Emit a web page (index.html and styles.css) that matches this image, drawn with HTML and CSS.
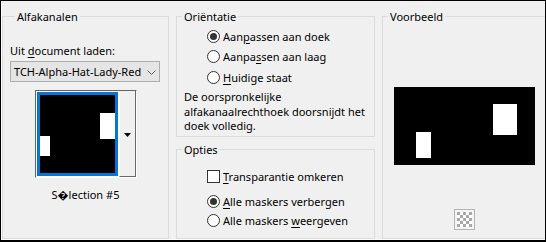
FILE: index.html
```html
<!DOCTYPE html>
<html lang="nl">
<head>
<meta charset="utf-8">
<title>Alfakanalen</title>
<link rel="stylesheet" href="styles.css">
</head>
<body>
<div class="dialog">
  <fieldset class="group g-alpha">
    <legend>Alfakanalen</legend>
    <div class="field-label">Uit <u>d</u>ocument laden:</div>
    <div class="select">
      <span class="select-text">TCH-Alpha-Hat-Lady-Red</span>
      <svg class="chev" width="9" height="5" viewBox="0 0 9 5"><polyline points="0.5,0.5 4.5,4.5 8.5,0.5" fill="none" stroke="#606060" stroke-width="1"/></svg>
    </div>
    <div class="thumb-frame">
      <div class="thumb">
        <svg class="thumb-img" width="75" height="78" viewBox="0 0 75 78"><rect width="75" height="78" fill="#000"/><rect x="60" y="18" width="15" height="26" fill="#fff"/><rect x="0" y="41" width="10" height="20" fill="#fff"/></svg>
      </div>
      <div class="thumb-btn">
        <svg width="7" height="4" viewBox="0 0 7 4"><polygon points="0,0 7,0 3.5,4" fill="#000"/></svg>
      </div>
    </div>
    <div class="caption">S&#xFFFD;lection #5</div>
  </fieldset>

  <div class="middle">
    <fieldset class="group g-orient">
      <legend>Oriëntatie</legend>
      <div class="option radio-row"><span class="radio checked"></span><span class="opt-text">Aan<u>p</u>assen aan doek</span></div>
      <div class="option radio-row"><span class="radio"></span><span class="opt-text">Aanpa<u>s</u>sen aan laag</span></div>
      <div class="option radio-row"><span class="radio"></span><span class="opt-text"><u>H</u>uidige staat</span></div>
      <p class="note">De oorspronkelijke<br>alfakanaalrechthoek doorsnijdt het<br>doek volledig.</p>
    </fieldset>
    <fieldset class="group g-opts">
      <legend>Opties</legend>
      <div class="option check-row"><span class="checkbox"></span><span class="opt-text"><u>T</u>ransparantie omkeren</span></div>
      <div class="radios">
        <div class="option radio-row2"><span class="radio checked"></span><span class="opt-text"><u>A</u>lle maskers verbergen</span></div>
        <div class="option radio-row2"><span class="radio"></span><span class="opt-text">Alle maskers <u>w</u>eergeven</span></div>
      </div>
    </fieldset>
  </div>

  <fieldset class="group g-preview">
    <legend>Voorbeeld</legend>
    <svg class="preview" width="141" height="78" viewBox="0 0 141 78"><rect width="141" height="78" fill="#000"/><rect x="99" y="17" width="24" height="31" fill="#fff"/><rect x="22" y="45" width="15" height="26" fill="#fff"/></svg>
    <svg class="checker" width="21" height="21" viewBox="0 0 21 21">
      <rect x="0.5" y="0.5" width="20" height="20" fill="#f4f4f4" stroke="#b4b4b4"/>
      <rect x="3" y="3" width="15" height="15" fill="#fff"/>
      <g fill="#a8a8a8">
        <rect x="3" y="3" width="3" height="3"/><rect x="9" y="3" width="3" height="3"/><rect x="15" y="3" width="3" height="3"/>
        <rect x="6" y="6" width="3" height="3"/><rect x="12" y="6" width="3" height="3"/>
        <rect x="3" y="9" width="3" height="3"/><rect x="9" y="9" width="3" height="3"/><rect x="15" y="9" width="3" height="3"/>
        <rect x="6" y="12" width="3" height="3"/><rect x="12" y="12" width="3" height="3"/>
        <rect x="3" y="15" width="3" height="3"/><rect x="9" y="15" width="3" height="3"/><rect x="15" y="15" width="3" height="3"/>
      </g>
    </svg>
  </fieldset>
</div>
</body>
</html>
```

FILE: styles.css
```css
html, body {
  margin: 0;
  padding: 0;
  background: #f0f0f0;
}

body {
  font-family: "Noto Sans", sans-serif;
  font-size: 11px;
  color: #000;
}

.dialog {
  box-sizing: border-box;
  width: 546px;
  height: 242px;
  border: 1px solid #000;
  border-bottom-width: 2px;
  background: #f0f0f0;
  box-shadow: inset 1px 0 0 #fff, inset 0 -1px 0 #fff;
  overflow: hidden;
  display: grid;
  grid-template-columns: 167px 199px 164px;
  column-gap: 7px;
  padding: 8px 0 1px 1px;
}

.group {
  margin: 0;
  padding: 0;
  min-width: 0;
  border: 1px solid #dcdcdc;
  box-sizing: border-box;
}

.group legend {
  margin-left: 5px;
  padding: 0 2px;
  line-height: 15px;
  height: 15px;
}

u {
  text-decoration-thickness: 1px;
  text-underline-offset: 2px;
}

/* Alfakanalen */
.g-alpha {
  padding: 0 7px 0 7px;
  display: flex;
  flex-direction: column;
}

.field-label {
  margin-top: 19px;
  line-height: 15px;
  white-space: nowrap;
}

.select {
  margin-top: 3px;
  box-sizing: border-box;
  width: 150px;
  height: 21px;
  border: 1px solid #adadad;
  background: #e5e5e5;
  display: flex;
  align-items: center;
  padding: 0 3px 0 3px;
}

.select-text {
  flex: 1;
  white-space: nowrap;
  line-height: 15px;
}

.chev {
  display: block;
  margin-top: 1px;
}

.thumb-frame {
  margin-top: 8px;
  margin-left: 25px;
  box-sizing: border-box;
  width: 102px;
  height: 88px;
  border-top: 1px solid #646464;
  border-left: 1px solid #646464;
  border-right: 1px solid #fff;
  border-bottom: 1px solid #fff;
  display: flex;
}

.thumb {
  box-sizing: border-box;
  width: 83px;
  height: 86px;
  padding: 1px;
  background: #fff;
}

.thumb-img {
  display: block;
  border: 3px solid #0078d7;
}

.thumb-btn {
  box-sizing: border-box;
  width: 17px;
  height: 86px;
  border-left: 1px solid #fff;
  border-right: 1px solid #696969;
  border-bottom: 1px solid #696969;
  background: #f0f0f0;
  display: flex;
  align-items: center;
  justify-content: center;
}

.thumb-btn svg {
  display: block;
  margin-top: 2px;
}

.caption {
  margin-top: 9px;
  line-height: 15px;
  text-align: center;
  white-space: nowrap;
}

/* middle column */
.middle {
  display: flex;
  flex-direction: column;
  gap: 5px;
  min-height: 0;
}

.g-orient {
  height: 128px;
  padding: 2px 0 0 0;
}

.g-opts {
  flex: 1;
  padding: 9px 0 0 0;
}

.option {
  display: flex;
  align-items: center;
  padding-left: 30px;
  white-space: nowrap;
}

.radio-row {
  height: 20.5px;
}

.check-row {
  height: 20px;
}

.radios {
  margin-top: 5.5px;
}

.radio-row2 {
  height: 19px;
}

.opt-text {
  margin-left: 3px;
  line-height: 15px;
}

.radio {
  box-sizing: border-box;
  width: 13px;
  height: 13px;
  border: 1px solid #333;
  border-radius: 50%;
  background: #fff;
  display: flex;
  align-items: center;
  justify-content: center;
  flex: none;
}

.radio.checked::after {
  content: "";
  width: 7px;
  height: 7px;
  border-radius: 50%;
  background: #333;
}

.checkbox {
  box-sizing: border-box;
  width: 13px;
  height: 13px;
  border: 1px solid #333;
  background: #fff;
  flex: none;
}

.note {
  margin: 2.5px 0 0 0;
  padding-left: 7px;
  line-height: 14.5px;
  white-space: nowrap;
}

/* Voorbeeld */
.g-preview {
  padding: 0;
  display: flex;
  flex-direction: column;
  align-items: center;
}

.preview {
  display: block;
  margin-top: 63px;
}

.checker {
  display: block;
  margin-top: 44px;
}
```
